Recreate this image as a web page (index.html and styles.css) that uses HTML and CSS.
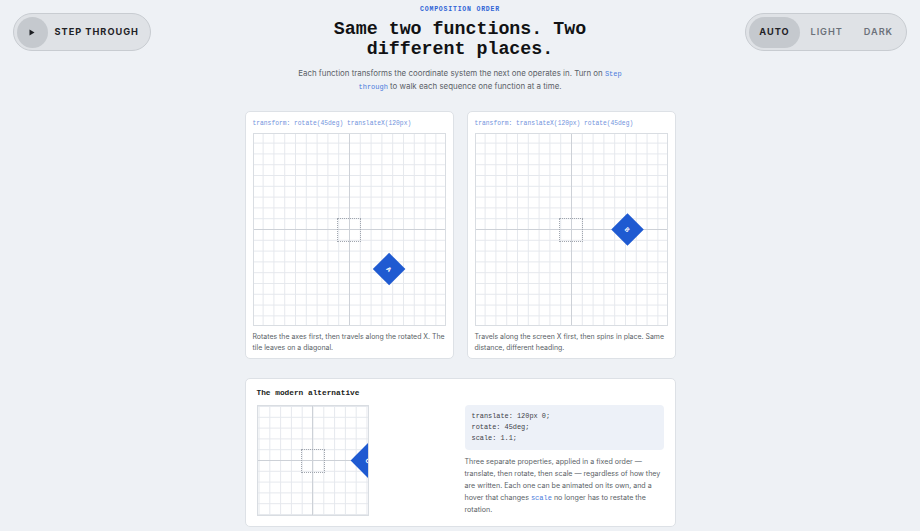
FILE: index.html
```html
<!DOCTYPE html>
<html lang="en">
<head>
<meta charset="utf-8">
<title>Composition order</title>
<link rel="stylesheet" href="styles.css">
</head>
<body>
<header class="top">
  <button class="step" type="button">
    <span class="dot"><svg width="6" height="7" viewBox="0 0 6 7"><polygon points="0.5,0.5 5.5,3.5 0.5,6.5" fill="#1b1d21"/></svg></span>
    <span>STEP THROUGH</span>
  </button>
  <div class="head">
    <div class="eyebrow">COMPOSITION ORDER</div>
    <h1 class="title">Same two functions. Two different places.</h1>
    <p class="lede">Each function transforms the coordinate system the next one operates in. Turn on <code>Step through</code> to walk each sequence one function at a time.</p>
  </div>
  <div class="modes">
    <span class="mode on">AUTO</span>
    <span class="mode">LIGHT</span>
    <span class="mode">DARK</span>
  </div>
</header>
<main>
  <section class="pair">
    <article class="card demo">
      <div class="label">transform: rotate(45deg) translateX(120px)</div>
      <div class="grid square">
        <span class="ghost"></span>
        <span class="tile tile-a">A</span>
      </div>
      <p class="desc">Rotates the axes first, then travels along the rotated X. The tile leaves on a diagonal.</p>
    </article>
    <article class="card demo">
      <div class="label">transform: translateX(120px) rotate(45deg)</div>
      <div class="grid square">
        <span class="ghost"></span>
        <span class="tile tile-b">B</span>
      </div>
      <p class="desc">Travels along the screen X first, then spins in place. Same distance, different heading.</p>
    </article>
  </section>
  <section class="card modern">
    <h2 class="mtitle">The modern alternative</h2>
    <div class="cols">
      <div class="grid small">
        <span class="ghost"></span>
        <span class="tile tile-c">C</span>
      </div>
      <div class="side">
        <pre class="code">translate: 120px 0;
rotate: 45deg;
scale: 1.1;</pre>
        <p class="note">Three separate properties, applied in a fixed order — translate, then rotate, then scale — regardless of how they are written. Each one can be animated on its own, and a hover that changes <code>scale</code> no longer has to restate the rotation.</p>
      </div>
    </div>
  </section>
</main>
</body>
</html>
```
FILE: styles.css
```css
* { box-sizing: border-box; margin: 0; padding: 0; }
body {
  background: #eef1f5;
  font-family: Inter, "Noto Sans", sans-serif;
  color: #1a1c20;
}
.top {
  display: grid;
  grid-template-columns: 1fr 346px 1fr;
  align-items: start;
  padding: 4px 13px 0;
}
.step {
  justify-self: start;
  margin-top: 9px;
  display: flex;
  align-items: center;
  gap: 7px;
  height: 38px;
  padding: 0 11px 0 2.5px;
  border: 1px solid #c8ccd1;
  border-radius: 19px;
  background: #dfe2e6;
  font: 700 9.2px/1 Inter, sans-serif;
  letter-spacing: 1px;
  color: #1f2226;
}
.dot {
  width: 31px;
  height: 31px;
  border-radius: 50%;
  background: #c5c9ce;
  display: flex;
  align-items: center;
  justify-content: center;
}
.dot svg { display: block; }
.modes {
  justify-self: end;
  margin-top: 9px;
  display: flex;
  height: 38px;
  padding: 2.5px;
  border: 1px solid #c8ccd1;
  border-radius: 19px;
  background: #dfe2e6;
}
.mode {
  display: flex;
  align-items: center;
  padding: 0 10.5px;
  border-radius: 16px;
  font: 600 9.2px/1 Inter, sans-serif;
  letter-spacing: 0.95px;
  color: #6c717a;
}
.mode.on {
  background: #c5c9ce;
  color: #1f2226;
  font-weight: 700;
}
.head { text-align: center; }
.eyebrow {
  font: 700 6.5px/12px "Liberation Mono", monospace;
  letter-spacing: 0.8px;
  color: #2f64d6;
}
.title {
  margin-top: 3px;
  font: 700 18.3px/20px "Liberation Mono", monospace;
  color: #111214;
}
.lede {
  margin-top: 7.5px;
  font: 400 7.9px/13px Inter, sans-serif;
  color: #5a5f67;
}
.lede code {
  font: 400 7px "Liberation Mono", monospace;
  color: #4a7bdc;
}
.note code {
  font: 400 7px "Liberation Mono", monospace;
  color: #4a7bdc;
}
main {
  width: 431px;
  margin: 18.5px auto 0;
}
.pair {
  display: grid;
  grid-template-columns: 1fr 1fr;
  gap: 13px;
}
.card {
  background: #fff;
  border: 1px solid #dde1e6;
  border-radius: 5px;
}
.demo { padding: 7px 7px 5px; }
.label {
  font: 400 6.3px/10px "Liberation Mono", monospace;
  color: #7393dc;
  margin-bottom: 4px;
  white-space: nowrap;
}
.grid {
  position: relative;
  overflow: hidden;
  border: 1px solid #d9dde2;
  background-color: #fff;
  background-image:
    linear-gradient(to right, transparent calc(50% - 0.5px), #e5e8ed calc(50% - 0.5px), #e5e8ed calc(50% + 0.5px), transparent calc(50% + 0.5px)),
    linear-gradient(to bottom, transparent calc(50% - 0.5px), #e5e8ed calc(50% - 0.5px), #e5e8ed calc(50% + 0.5px), transparent calc(50% + 0.5px));
  background-size: 10.8px 10.8px;
  background-position: center;
}
.grid::before, .grid::after {
  content: "";
  position: absolute;
  background: #cdd1d7;
}
.grid::before { left: calc(50% - 0.5px); top: 0; bottom: 0; width: 1px; }
.grid::after { top: calc(50% - 0.5px); left: 0; right: 0; height: 1px; }
.square { width: 100%; aspect-ratio: 1 / 1; }
.small { width: 112px; height: 111px; }
.ghost {
  position: absolute;
  left: 50%;
  top: 50%;
  width: 24px;
  height: 24px;
  margin: -12px 0 0 -12px;
  border: 1px dotted #a2a7af;
  z-index: 1;
}
.tile {
  position: absolute;
  left: 50%;
  top: 50%;
  width: 23px;
  height: 23px;
  margin: -11.5px 0 0 -11.5px;
  background: #1f5ad1;
  color: #fff;
  font: 700 6px/1 Inter, sans-serif;
  display: flex;
  align-items: center;
  justify-content: center;
  z-index: 2;
}
.tile-a { transform: rotate(45deg) translateX(56px); }
.tile-b { transform: translateX(56px) rotate(45deg); }
.tile-c { transform: translate(56px, 0) rotate(45deg) scale(1.1); }
.desc {
  margin-top: 5px;
  font: 400 6.95px/11px Inter, sans-serif;
  color: #5a5f67;
}
.modern {
  margin-top: 19px;
  padding: 10px 11px;
}
.mtitle {
  font: 700 7.8px/9px "Liberation Mono", monospace;
  color: #1a1c20;
  margin-bottom: 7px;
}
.cols {
  display: grid;
  grid-template-columns: 1fr 1fr;
  gap: 9px;
}
.code {
  background: #edf1f8;
  border-radius: 4px;
  padding: 6px 7px;
  font: 400 6.9px/11px "Liberation Mono", monospace;
  color: #3d4148;
}
.note {
  margin-top: 6px;
  font: 400 7.1px/12px Inter, sans-serif;
  color: #5a5f67;
}
```
